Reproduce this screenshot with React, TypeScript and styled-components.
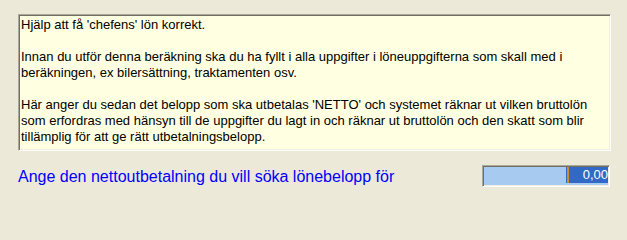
import styled, { createGlobalStyle } from "styled-components";

const GlobalStyle = createGlobalStyle`
  html, body {
    margin: 0;
    padding: 0;
    background: #ece9d8;
  }
  body {
    font-family: "Liberation Sans", Arial, sans-serif;
  }
`;

export const Wrapper = styled.div`
  width: 627px;
  height: 215px;
  box-sizing: border-box;
  padding: 14px 16px 0 18px;
  display: flex;
  flex-direction: column;
  background: #ece9d8;
`;

export const InfoBox = styled.div`
  height: 137px;
  box-sizing: border-box;
  padding: 2px 2px 0 2px;
  background: #ffffe1;
  border: 1px solid;
  border-color: #aca899 #ffffff #ffffff #aca899;
  box-shadow: inset 1px 1px 0 #716f64, inset -1px -1px 0 #f1efe2;
  font-size: 13px;
  line-height: 16px;
  color: #000000;
`;

export const Paragraph = styled.p`
  margin: 0 0 16px;
  white-space: nowrap;
`;

export const InputRow = styled.div`
  margin-top: 13px;
  padding-right: 1px;
  display: flex;
  align-items: center;
  justify-content: space-between;
`;

export const Label = styled.span`
  color: #0000ff;
  font-size: 16px;
  line-height: 22px;
  padding-top: 2px;
`;

export const Field = styled.div`
  width: 128px;
  height: 22px;
  box-sizing: border-box;
  padding: 1px 1px 0 0;
  display: flex;
  justify-content: flex-end;
  align-items: flex-start;
  background: #a6caf0;
  border: 1px solid;
  border-color: #aca899 #ffffff #ffffff #aca899;
  box-shadow: inset 1px 1px 0 #716f64, inset -1px -1px 0 #f1efe2;
`;

export const Selection = styled.div`
  width: 42px;
  height: 16px;
  display: flex;
  align-items: center;
  background: #316ac5;
  padding-left: 1px;
  box-sizing: border-box;
`;

export const Caret = styled.span`
  width: 2px;
  height: 16px;
  background: #d68a2e;
`;

export const Value = styled.span`
  flex: 1;
  text-align: right;
  color: #ffffff;
  font-size: 13px;
  line-height: 16px;
`;

const paragraphs: string[][] = [
  ["Hjälp att få 'chefens' lön korrekt."],
  [
    "Innan du utför denna beräkning ska du ha fyllt i alla uppgifter i löneuppgifterna som skall med i",
    "beräkningen, ex bilersättning, traktamenten osv.",
  ],
  [
    "Här anger du sedan det belopp som ska utbetalas 'NETTO' och systemet räknar ut vilken bruttolön",
    "som erfordras med hänsyn till de uppgifter du lagt in och räknar ut bruttolön och den skatt som blir",
    "tillämplig för att ge rätt utbetalningsbelopp.",
  ],
];

export default function App() {
  return (
    <>
      <GlobalStyle />
      <Wrapper>
        <InfoBox>
          {paragraphs.map((lines, i) => (
            <Paragraph key={i}>
              {lines.map((line, j) => (
                <span key={j}>
                  {line}
                  {j < lines.length - 1 && <br />}
                </span>
              ))}
            </Paragraph>
          ))}
        </InfoBox>
        <InputRow>
          <Label>Ange den nettoutbetalning du vill söka lönebelopp för</Label>
          <Field>
            <Selection>
              <Caret />
              <Value>0,00</Value>
            </Selection>
          </Field>
        </InputRow>
      </Wrapper>
    </>
  );
}
